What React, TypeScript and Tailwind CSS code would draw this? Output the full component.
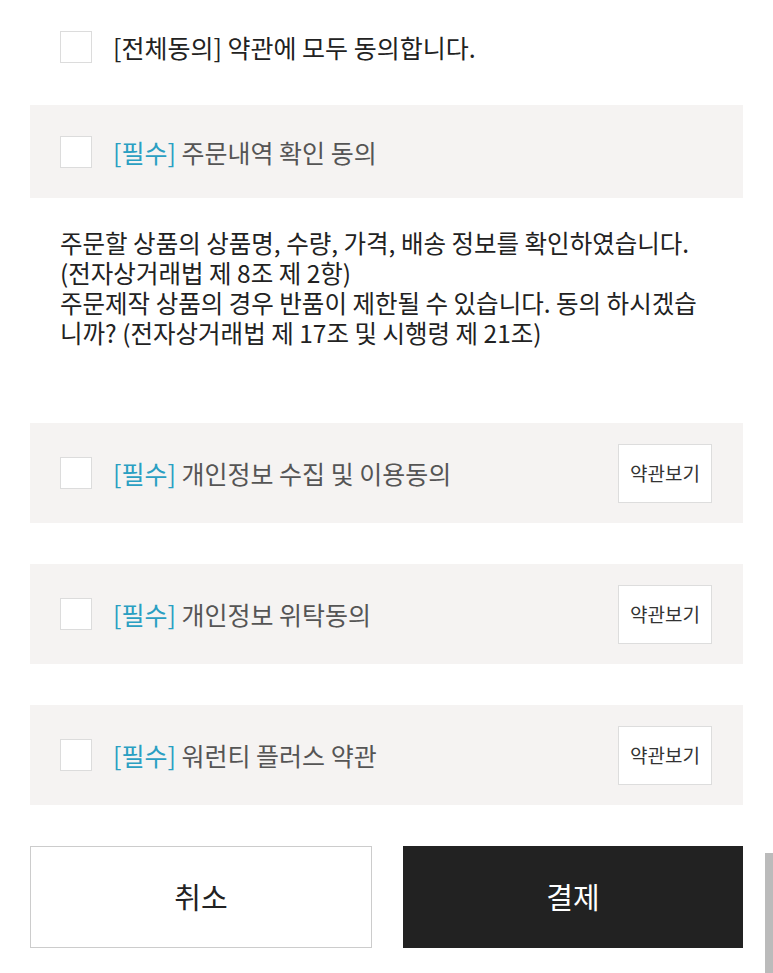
import React from "react";

const font = { fontFamily: '"Noto Sans CJK KR", "Noto Sans", sans-serif' };

function Box() {
  return <div className="w-[32px] h-[32px] shrink-0 bg-white border border-[#dcdcdc]" />;
}

function Row({ label, btn }: { label: string; btn?: boolean }) {
  return (
    <div className="h-[100px] bg-[#f5f3f2] flex items-center pl-[30px] pr-[31px]">
      <Box />
      <div className="ml-[21px] text-[25px] leading-[32px] flex-1">
        <span className="text-[#2a9fc2]">[필수]</span>
        <span className="text-[#555555]"> {label}</span>
      </div>
      {btn && (
        <button className="w-[94px] h-[59px] bg-white border border-[#dddddd] text-[19px] text-[#333333]">
          약관보기
        </button>
      )}
    </div>
  );
}

export default function App() {
  return (
    <div style={font} className="relative w-[773px] h-[973px] bg-white overflow-hidden px-[30px]">
      <div className="pt-[31px] pl-[30px] flex items-center">
        <Box />
        <span className="ml-[21px] text-[25px] leading-[32px] text-[#222222]">
          [전체동의] 약관에 모두 동의합니다.
        </span>
      </div>
      <div className="mt-[42px] h-[93px] bg-[#f5f3f2] flex items-center pl-[30px]">
        <Box />
        <div className="ml-[21px] text-[25px] leading-[32px]">
          <span className="text-[#2a9fc2]">[필수]</span>
          <span className="text-[#555555]"> 주문내역 확인 동의</span>
        </div>
      </div>
      <p className="mt-[30px] pl-[30px] pr-[36px] text-[24.5px] leading-[30px] text-[#222222] break-all">
        주문할 상품의 상품명, 수량, 가격, 배송 정보를 확인하였습니다.
        <br />
        (전자상거래법 제 8조 제 2항)
        <br />
        주문제작 상품의 경우 반품이 제한될 수 있습니다. 동의 하시겠습니까? (전자상거래법 제 17조 및 시행령 제 21조)
      </p>
      <div className="mt-[75px] flex flex-col gap-[41px]">
        <Row label="개인정보 수집 및 이용동의" btn />
        <Row label="개인정보 위탁동의" btn />
        <Row label="워런티 플러스 약관" btn />
      </div>
      <div className="mt-[41px] flex gap-[31px]">
        <button className="flex-1 h-[102px] bg-white border border-[#cccccc] text-[29px] text-[#222222]">
          취소
        </button>
        <button className="flex-1 h-[102px] bg-[#222222] text-[29px] text-white">
          결제
        </button>
      </div>
      <div className="absolute right-0 top-[853px] w-[8px] h-[120px] bg-[#bbbbbb]" />
    </div>
  );
}
